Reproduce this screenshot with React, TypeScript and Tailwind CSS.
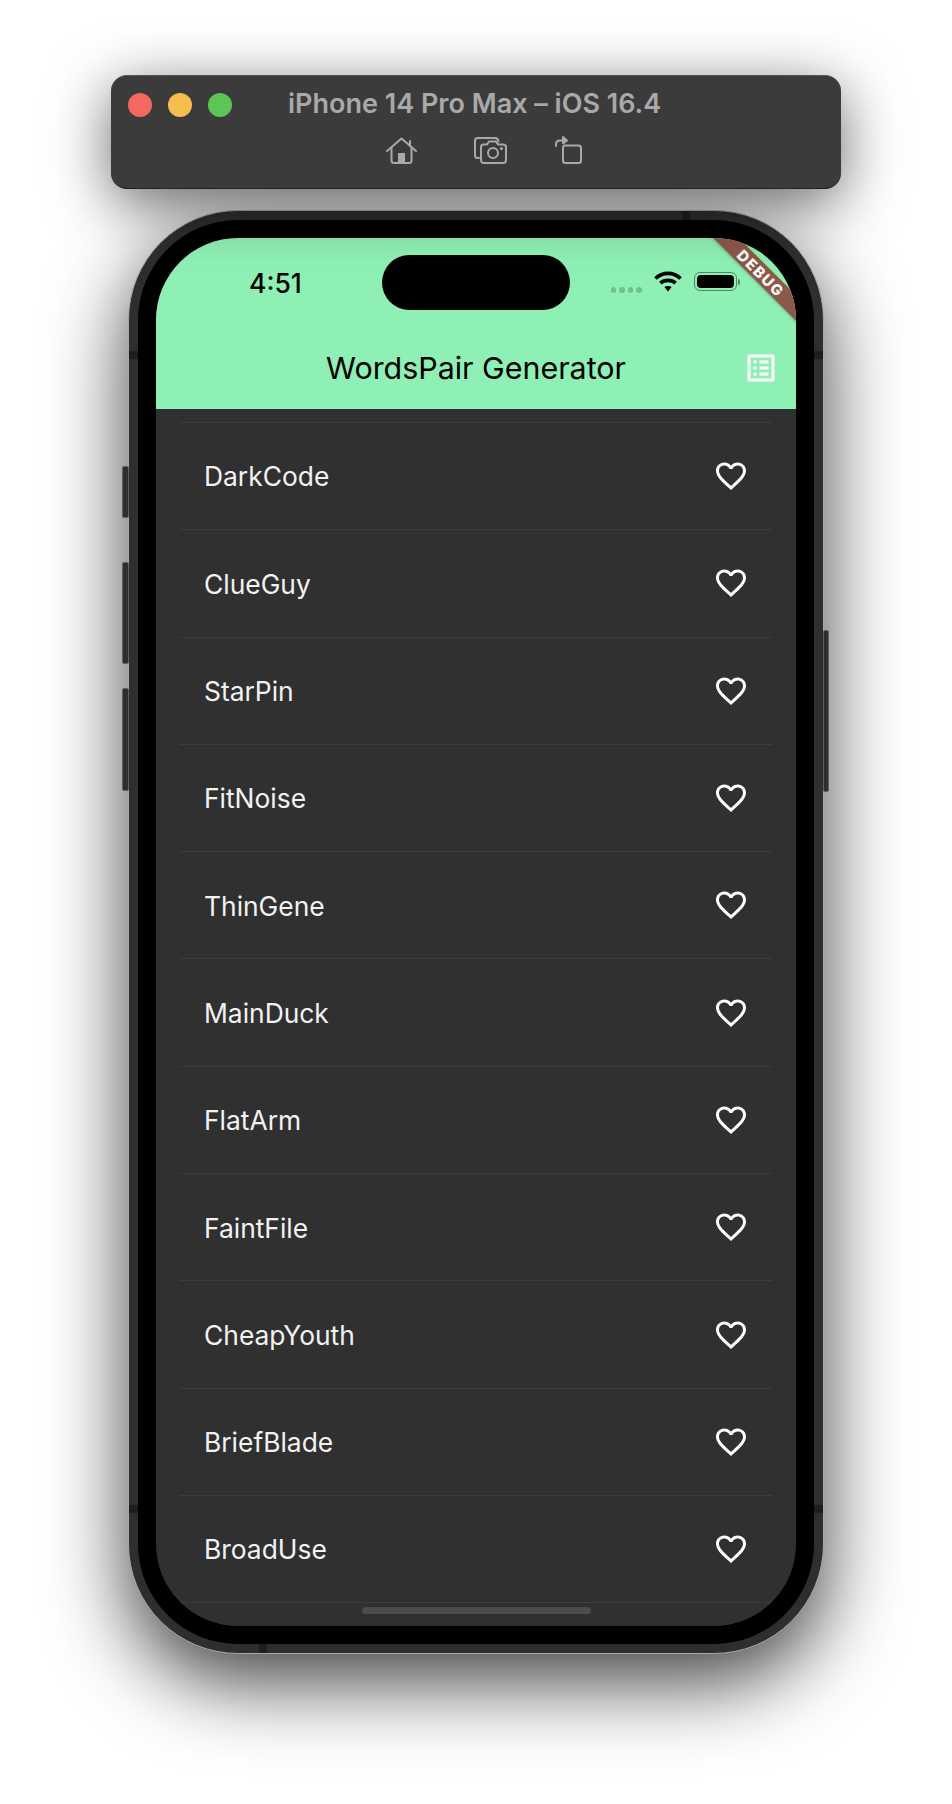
import React from 'react';
import { MdFavoriteBorder, MdOutlineListAlt } from 'react-icons/md';

const WORDS = [
  'DarkCode',
  'ClueGuy',
  'StarPin',
  'FitNoise',
  'ThinGene',
  'MainDuck',
  'FlatArm',
  'FaintFile',
  'CheapYouth',
  'BriefBlade',
  'BroadUse',
];

const HomeIcon = () => (
  <svg width="31" height="27" viewBox="0 0 31 27" fill="none" stroke="#a9a9a9" strokeWidth="2" strokeLinejoin="round" strokeLinecap="round">
    <path d="M1 14 L15.5 1.5 L30 14" />
    <path d="M24 4 V9" />
    <path d="M5.5 11 V23.5 Q5.5 26 8 26 H23 Q25.5 26 25.5 23.5 V11" />
    <rect x="12" y="16" width="7" height="10" fill="#a9a9a9" stroke="none" />
  </svg>
);

const CameraIcon = () => (
  <svg width="33" height="27" viewBox="0 0 33 27" fill="none" stroke="#a9a9a9" strokeWidth="2" strokeLinejoin="round" strokeLinecap="round">
    <path d="M5 21 H3.5 Q1 21 1 18.5 V4 Q1 1 4 1 H21 Q24 1 24.5 4.5" />
    <path d="M7 10 Q7 7.5 9.5 7.5 H13 L15 4.5 H22 L24 7.5 H29 Q32 7.5 32 10 V23 Q32 26 29 26 H10 Q7 26 7 23 Z" />
    <circle cx="19" cy="16" r="5" />
    <circle cx="27.5" cy="11.5" r="0.6" fill="#a9a9a9" />
  </svg>
);

const RotateIcon = () => (
  <svg width="27" height="28" viewBox="0 0 27 28" fill="none" stroke="#a9a9a9" strokeWidth="2" strokeLinejoin="round" strokeLinecap="round">
    <rect x="8" y="9.5" width="18" height="17.5" rx="2.5" />
    <path d="M1 10 V8 Q1 4.5 5 4.5 H9" />
    <path d="M8 1 L12 4.5 L8 7.5 Z" fill="#a9a9a9" />
  </svg>
);

const WifiIcon = () => (
  <svg width="28" height="21" viewBox="0 0 28 21" fill="none" stroke="#000" strokeWidth="3.6">
    <path d="M1.4 7.6 C8.4 0.6 19.6 0.6 26.6 7.6" />
    <path d="M6.4 12.2 C10.6 8.4 17.4 8.4 21.6 12.2" />
    <path d="M10.4 16 L14 20.6 L17.6 16 C15.6 14.6 12.4 14.6 10.4 16 Z" fill="#000" stroke="none" />
  </svg>
);

const SideButton = ({ className }: { className: string }) => (
  <div className={`absolute bg-[#2e2e2e] border border-[#5f5f5f] rounded-[2px] ${className}`} />
);

export default function App() {
  return (
    <div className="w-[952px] h-[1804px] bg-white overflow-hidden pt-[75px] font-['Inter',sans-serif]">
      {/* simulator title bar */}
      <div className="relative z-10 ml-[111px] w-[730px] h-[114px] rounded-[16px] bg-[#3b3b3b] border-t border-t-[#555] border-b border-b-[#222] shadow-[0_14px_60px_rgba(0,0,0,0.6)] flex flex-col">
        <div className="flex items-center h-[54px] pl-[17px]">
          <div className="flex gap-[16px] mt-[4px]">
            <span className="w-[24px] h-[24px] rounded-full bg-[#f4695f]" />
            <span className="w-[24px] h-[24px] rounded-full bg-[#f6bd4f]" />
            <span className="w-[24px] h-[24px] rounded-full bg-[#5ec454]" />
          </div>
          <span className="ml-[56px] text-[27px] leading-none font-semibold text-[#a9a9a9] whitespace-nowrap">
            iPhone 14 Pro Max – iOS 16.4
          </span>
        </div>
        <div className="flex items-center pl-[275px] gap-[57px] mt-[6px]">
          <HomeIcon />
          <CameraIcon />
          <div className="ml-[-9px]">
            <RotateIcon />
          </div>
        </div>
      </div>

      {/* phone */}
      <div className="relative mt-[21px] ml-[128px] w-[696px] h-[1444px] rounded-[110px] bg-[#2e2e2e] border border-[#a8a8a8] pt-[9px] px-[9px] pb-[9px] shadow-[0_28px_80px_rgba(0,0,0,0.75)]">
        <SideButton className="left-[-7px] top-[255px] w-[7px] h-[52px]" />
        <SideButton className="left-[-7px] top-[351px] w-[7px] h-[102px]" />
        <SideButton className="left-[-7px] top-[477px] w-[7px] h-[103px]" />
        <SideButton className="right-[-6px] top-[419px] w-[6px] h-[162px]" />

        <div className="absolute top-0 left-[553px] w-[8px] h-[9px] bg-[#1e1e1e]" />
        <div className="absolute bottom-0 left-[130px] w-[8px] h-[9px] bg-[#1e1e1e]" />
        <div className="absolute left-0 top-[140px] w-[9px] h-[8px] bg-[#1e1e1e]" />
        <div className="absolute right-0 top-[140px] w-[9px] h-[8px] bg-[#1e1e1e]" />
        <div className="absolute left-0 bottom-[140px] w-[9px] h-[8px] bg-[#1e1e1e]" />
        <div className="absolute right-0 bottom-[140px] w-[9px] h-[8px] bg-[#1e1e1e]" />

        <div className="w-full h-full rounded-[100px] bg-black p-[18px]">
          <div className="relative w-full h-full rounded-[82px] overflow-hidden bg-[#303030] flex flex-col">
            {/* app bar */}
            <div className="relative h-[171px] shrink-0 bg-[#8ef0b4]">
              <div className="flex items-center h-[88px] pt-[2px]">
                <span className="ml-[93px] text-[26.5px] leading-none font-medium text-black">4:51</span>
                <div className="ml-[80px] w-[188px] h-[55px] rounded-full bg-black -mt-[1px]" />
                <div className="ml-[41px] flex gap-[3px] mt-[14px]">
                  <span className="w-[5.5px] h-[5.5px] rounded-full bg-[#6fbf90]" />
                  <span className="w-[5.5px] h-[5.5px] rounded-full bg-[#6fbf90]" />
                  <span className="w-[5.5px] h-[5.5px] rounded-full bg-[#6fbf90]" />
                  <span className="w-[5.5px] h-[5.5px] rounded-full bg-[#6fbf90]" />
                </div>
                <div className="ml-[12px] -mt-[3px]">
                  <WifiIcon />
                </div>
                <div className="ml-[12px] flex items-center -mt-[3px]">
                  <div className="w-[43px] h-[19px] rounded-[6px] border border-[#4d8a68] p-[2px]">
                    <div className="w-full h-full rounded-[4px] bg-black" />
                  </div>
                  <div className="ml-[1px] w-[2px] h-[6px] rounded-r-full bg-[#4d8a68]" />
                </div>
              </div>
              <div className="flex items-center justify-center h-[50px] mt-[17px]">
                <span className="text-[30.4px] leading-none text-black whitespace-nowrap">WordsPair Generator</span>
              </div>
              <MdOutlineListAlt className="absolute right-[17.5px] top-[111.5px] text-white" size={36} />
            </div>

            {/* list */}
            <div className="pt-[13px] flex-1">
              {WORDS.map((word) => (
                <div key={word} className="mx-[24px] h-[107.3px] border-t border-[#3c3c3c] pl-[24px] pr-[23px] flex items-center justify-between">
                  <span className="text-[26.4px] leading-none text-[#f2f2f2] pt-[1px]">{word}</span>
                  <MdFavoriteBorder className="text-white" size={36} />
                </div>
              ))}
              <div className="mx-[24px] border-t border-[#3c3c3c]" />
            </div>

            {/* home indicator */}
            <div className="absolute bottom-[12px] left-[206px] w-[229px] h-[7px] rounded-full bg-[#4c4c4c]" />

            {/* debug banner */}
            <div className="absolute top-[26.25px] right-[-64.75px] w-[200px] h-[18px] rotate-45 bg-[#8d5846] flex items-center justify-center shadow-[0_1px_3px_rgba(0,0,0,0.25)]">
              <span className="text-[15px] leading-none font-extrabold tracking-[1.4px] text-white">DEBUG</span>
            </div>
          </div>
        </div>
      </div>
    </div>
  );
}
